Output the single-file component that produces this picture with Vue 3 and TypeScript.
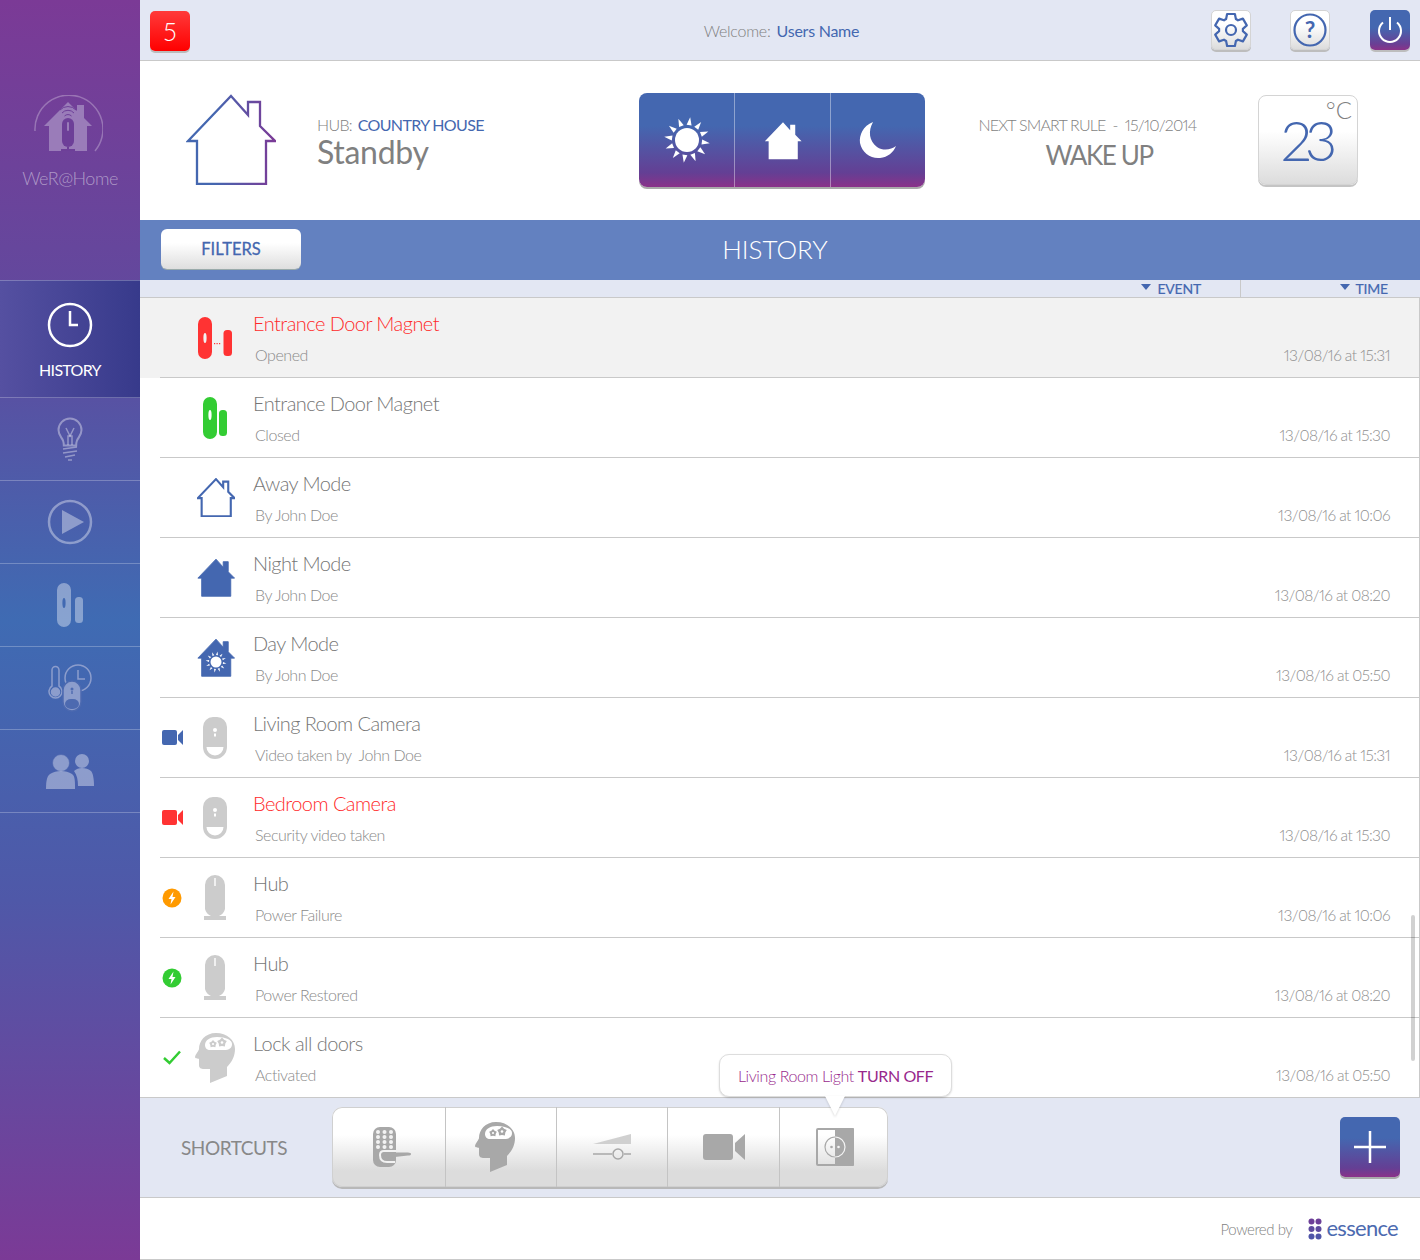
<template>
  <div class="app">
    <!-- icon sprite -->
    <svg class="sprite" width="0" height="0">
      <defs>
        <linearGradient id="house-grad" x1="0" y1="0" x2="1" y2="0">
          <stop offset="0" stop-color="#4467b0" />
          <stop offset=".3" stop-color="#4467b0" />
          <stop offset="1" stop-color="#7b3a96" />
        </linearGradient>
        <symbol id="i-house" viewBox="-1 -1 90 91">
          <path d="M44 1L61 20V7H73V31L88 46H79V89H10V46H1Z" />
        </symbol>
        <symbol id="i-magnet-open" viewBox="0 0 36 42">
          <path fill-rule="evenodd" d="M0 7a7 7 0 0 1 14 0v28a7 7 0 0 1-14 0zM7 16a1.600 5 0 0 0 0 10a1.600 5 0 0 0 0-10z" />
          <rect x="25.500" y="13" width="8.500" height="26" rx="3.500" />
          <rect x="16" y="26" width="1.200" height="1.200" />
          <rect x="18.500" y="26" width="1.200" height="1.200" />
          <rect x="21" y="26" width="1.200" height="1.200" />
        </symbol>
        <symbol id="i-magnet" viewBox="0 0 24 42">
          <path fill-rule="evenodd" d="M0 7a7 7 0 0 1 14 0v28a7 7 0 0 1-14 0zM7 13a1.600 5 0 0 0 0 10a1.600 5 0 0 0 0-10z" />
          <rect x="16" y="13" width="8" height="26" rx="3.500" />
        </symbol>
        <symbol id="i-sensor" viewBox="0 0 24 42">
          <path fill-rule="evenodd" d="M10 0h4a10 10 0 0 1 10 10v20a12 12 0 0 1-24 0v-20a10 10 0 0 1 10-10zM12 11a2 2 0 1 0 0 4a2 2 0 1 0 0-4zM11 16.500h2v3h-2zM3.500 30h17a8.500 8.500 0 0 1-17 0z" />
        </symbol>
        <symbol id="i-hub" viewBox="0 0 22 45">
          <path fill-rule="evenodd" d="M11 0a10 10 0 0 1 10 10v24a10 10 0 0 1-6 7h7v4h-22v-4h7a10 10 0 0 1-6-7v-24a10 10 0 0 1 10-10zM10.300 3v8h1.400v-8z" />
        </symbol>
        <symbol id="i-cam" viewBox="0 0 21 15">
          <rect width="15" height="15" rx="2" />
          <path d="M21 0v15l-5-5v-5z" />
        </symbol>
        <symbol id="i-head" viewBox="0 0 40 50">
          <path d="M21 0C10 0 4 8 4 16c0 1.500-4 6-4 8 0 1.500 3 1.500 4 2v6c0 3 2 4 5 4h6v14l17-7v-9c5-5 8-11 8-18C40 7 32 0 21 0z" />
          <path fill="#fff" d="M22 4c-7 0-12 3-12 8 0 3 2 5 5 5h14c5 0 8-2 8-6 0-4-6-7-15-7z" />
          <polygon :points="star(18, 11, 4)" />
          <polygon :points="star(27, 9.500, 5)" />
          <circle cx="18" cy="11" r="1.100" fill="#fff" />
          <circle cx="27" cy="9.500" r="1.300" fill="#fff" />
        </symbol>
      </defs>
    </svg>

    <aside class="sidebar">
      <div class="brand">
        <svg class="brand-logo" viewBox="0 0 70 58" width="70" height="58">
          <path d="M2 36A34 34 0 1 1 62 56" fill="none" stroke="rgba(255,255,255,.28)" stroke-width="1.500" />
          <path d="M35 7L44 16V10H51V23L59 31H54V56H16V31H11Z" fill="#9a7cb9" />
          <rect x="29" y="23" width="12" height="29" rx="6" fill="#6d3f98" />
          <rect x="34" y="27" width="2" height="9" rx="1" fill="#9a7cb9" />
          <path d="M28 55h14" stroke="#6d3f98" stroke-width="2" />
          <path d="M35 52v3" stroke="#6d3f98" stroke-width="2" />
          <path d="M27 15a11 11 0 0 1 16 0M29 18a8 8 0 0 1 12 0M31.500 21a5 5 0 0 1 7 0" fill="none" stroke="#6d3f98" stroke-width="1" />
        </svg>
        <div class="brand-name">WeR@Home</div>
      </div>
      <nav class="nav">
        <a class="nav-item active">
          <svg viewBox="0 0 46 46" width="46" height="46" fill="none" stroke="#fff" stroke-width="2.500">
            <circle cx="23" cy="23" r="21" />
            <path d="M23 9V23H31" />
          </svg>
          <span>HISTORY</span>
        </a>
        <a class="nav-item">
          <svg viewBox="0 0 26 44" width="26" height="44" fill="none" stroke="currentColor" stroke-width="2">
            <path d="M13 1.500a11.500 11.500 0 0 0-11.500 11.500c0 5 3 7 4.500 10.500.6 1.500.8 3 .8 5h12.400c0-2 .2-3.500.8-5 1.500-3.500 4.500-5.500 4.500-10.500A11.500 11.500 0 0 0 13 1.500z" />
            <path d="M9 11l4 8 4-8" stroke-width="1.500" />
            <path d="M11 28v-9h4v9" stroke-width="1.500" />
            <path d="M6 32l14-2M6 36l14-2M8 40l10-2M11 43h4" stroke-width="1.500" />
          </svg>
        </a>
        <a class="nav-item">
          <svg viewBox="0 0 46 46" width="46" height="46" fill="none" stroke="currentColor" stroke-width="2.500">
            <circle cx="23" cy="23" r="21" />
            <path d="M15 11L37 23L15 35Z" fill="currentColor" stroke="none" />
          </svg>
        </a>
        <a class="nav-item">
          <svg viewBox="0 0 26 44" width="26" height="44" fill="currentColor">
            <path fill-rule="evenodd" d="M0 7a7 7 0 0 1 14 0v30a7 7 0 0 1-14 0zM7 15a1.600 5 0 0 0 0 10a1.600 5 0 0 0 0-10z" />
            <rect x="18" y="14" width="8" height="26" rx="3.500" />
          </svg>
        </a>
        <a class="nav-item">
          <svg viewBox="0 0 44 48" width="44" height="48" fill="none" stroke="#8c9dcc" stroke-width="1.500">
            <circle cx="30" cy="14" r="13" />
            <path d="M30 6v9h7" />
            <path d="M4 22V6a3.500 3.500 0 0 1 7 0v16a6.500 6.500 0 1 1-7 0z" />
            <circle cx="7.500" cy="28" r="4" fill="#8c9dcc" />
            <rect x="15" y="17" width="18" height="30" rx="9" fill="#8c9dcc" stroke="#4d6ab0" />
            <rect x="17" y="35" width="14" height="10" rx="6" fill="#4d6ab0" stroke="none" />
            <circle cx="24" cy="25" r="1.500" fill="#4d6ab0" stroke="none" />
            <rect x="23.300" y="27" width="1.400" height="3" fill="#4d6ab0" stroke="none" />
          </svg>
        </a>
        <a class="nav-item">
          <svg viewBox="0 0 48 35" width="48" height="35" fill="currentColor">
            <circle cx="36" cy="7" r="7" />
            <path d="M28 17c2-2 5-3 8-3s7 1 9 3c2 2 3 8 3 15h-16c0-6-1-11-4-15z" />
            <circle cx="15" cy="9" r="8.500" stroke="#4a63ac" stroke-width=".6" />
            <path d="M0 35c0-8 1-13 4-15 3-2 7-3 11-3s8 1 11 3c3 2 3 7 3 15z" />
          </svg>
        </a>
      </nav>
    </aside>

    <main class="main">
      <header class="topbar">
        <div class="topbar-left"><button class="alert-badge">5</button></div>
        <div class="welcome">Welcome: <b>Users Name</b></div>
        <div class="topbar-actions">
          <button class="square-btn gear">
            <svg viewBox="0 0 36 36" width="36" height="36" fill="none" stroke="#4467b0" stroke-width="2.200" stroke-linejoin="round">
              <path :d="gearPath" />
              <circle cx="18" cy="18" r="5" />
            </svg>
          </button>
          <button class="square-btn">
            <svg viewBox="0 0 36 36" width="36" height="36" fill="none" stroke="#4467b0" stroke-width="2.200">
              <circle cx="18" cy="18" r="15.500" />
              <text x="18" y="26" class="help-mark">?</text>
            </svg>
          </button>
          <button class="square-btn dark">
            <svg viewBox="0 0 36 36" width="36" height="36" fill="none" stroke="#fff" stroke-width="2">
              <path d="M11 10.500a11 11 0 1 0 14 0" />
              <path d="M18 5V18" />
            </svg>
          </button>
        </div>
      </header>

      <section class="hero">
        <svg class="hero-house" width="90" height="91"><use href="#i-house" /></svg>
        <div class="hub">
          <div class="hub-label">HUB: <b>COUNTRY HOUSE</b></div>
          <div class="hub-state">Standby</div>
        </div>
        <div class="modes">
          <button class="mode">
            <svg viewBox="-24 -24 48 48" width="48" height="48" fill="#fff">
              <circle r="12" />
              <polygon v-for="a in sunRays" :key="a" points="-2.500,-15 2.500,-15 0,-23" :transform="`rotate(${a})`" />
            </svg>
          </button>
          <button class="mode">
            <svg width="38" height="39" class="mode-house"><use href="#i-house" /></svg>
          </button>
          <button class="mode">
            <svg viewBox="0 0 38 38" width="38" height="38" fill="#fff">
              <path d="M14 1C4 5 0 14 1 22c2 10 11 16 20 15 8-1 13-5 16-12-5 4-13 5-19 1C10 20 9 10 14 1z" />
            </svg>
          </button>
        </div>
        <div class="rule">
          <div class="rule-label">NEXT SMART RULE&nbsp; -&nbsp; 15/10/2014</div>
          <div class="rule-name">WAKE UP</div>
        </div>
        <div class="temp">
          <span class="temp-unit">°C</span>
          <span class="temp-value">23</span>
        </div>
      </section>

      <div class="titlebar">
        <button class="filters">FILTERS</button>
        <h1>HISTORY</h1>
      </div>

      <div class="columns">
        <div class="col col-event"><i class="caret"></i>EVENT</div>
        <div class="col col-time"><i class="caret"></i>TIME</div>
      </div>

      <div class="list">
        <div v-for="row in rows" :key="row.id" class="row-wrap" :class="{ selected: row.selected }">
          <div class="row">
            <div class="status">
              <svg v-if="row.status === 'cam'" width="21" height="15" :class="row.alert ? 'c-red' : 'c-blue'"><use href="#i-cam" /></svg>
              <svg v-else-if="row.status === 'fail' || row.status === 'ok'" viewBox="0 0 20 20" width="20" height="20">
                <circle cx="10" cy="10" r="9.500" :fill="row.status === 'fail' ? '#ff9a00' : '#33cc33'" />
                <path d="M11.500 3.500L6.500 11H9.500L8.500 16.500L13.500 9H10.500Z" fill="#fff" />
              </svg>
              <svg v-else-if="row.status === 'check'" class="check" viewBox="0 0 18 15" width="18" height="15" fill="none" stroke="#33cc33" stroke-width="2.500">
                <path d="M1 8L6.500 13L17 1.500" />
              </svg>
            </div>
            <div class="device">
              <svg v-if="row.icon === 'magnet-open'" width="36" height="42" class="c-red"><use href="#i-magnet-open" /></svg>
              <svg v-else-if="row.icon === 'magnet'" width="24" height="42" class="c-green"><use href="#i-magnet" /></svg>
              <svg v-else-if="row.icon === 'away'" width="38" height="39" class="h-outline"><use href="#i-house" /></svg>
              <svg v-else-if="row.icon === 'night'" width="38" height="39" class="h-solid"><use href="#i-house" /></svg>
              <span v-else-if="row.icon === 'day'" class="day-house">
                <svg width="38" height="39" class="h-solid"><use href="#i-house" /></svg>
                <svg class="day-sun" viewBox="-11 -11 22 22" width="22" height="22" fill="#fff">
                  <circle r="5.500" />
                  <polygon v-for="a in sunRays" :key="a" points="-1,-7 1,-7 0,-10.500" :transform="`rotate(${a})`" />
                </svg>
              </span>
              <svg v-else-if="row.icon === 'sensor'" width="24" height="42" class="c-grey"><use href="#i-sensor" /></svg>
              <svg v-else-if="row.icon === 'hub'" width="22" height="45" class="c-grey"><use href="#i-hub" /></svg>
              <svg v-else-if="row.icon === 'head'" width="40" height="50" class="c-grey"><use href="#i-head" /></svg>
            </div>
            <div class="texts">
              <div class="title" :class="{ alert: row.alert }">{{ row.title }}</div>
              <div class="sub">{{ row.sub }}</div>
            </div>
            <div class="time">{{ row.time }}</div>
          </div>
        </div>
        <div class="scroll-thumb"></div>
      </div>

      <section class="shortcuts">
        <div class="shortcuts-label">SHORTCUTS</div>
        <div class="shortcut-group">
          <button class="shortcut s-lock">
            <svg viewBox="0 0 38 40" width="38" height="40" fill="#a8a8a8">
              <rect width="23" height="40" rx="7" />
              <circle v-for="d in keypadDots" :key="d.id" :cx="d.x" :cy="d.y" r="2" fill="#f2f2f2" />
              <path d="M23 24H11Q7 24 7 28Q7 35 14 35H22" fill="none" stroke="#f2f2f2" stroke-width="2" />
              <path d="M10 25.500H35Q38 25.500 38 27Q38 28.500 35 28.500L13 31Q10 31 10 28Z" />
            </svg>
          </button>
          <button class="shortcut s-head">
            <svg width="40" height="50" class="c-short"><use href="#i-head" /></svg>
          </button>
          <button class="shortcut">
            <svg viewBox="0 0 38 26" width="38" height="26" fill="none">
              <path d="M0 10L38 0V10Z" fill="#d0d0d0" />
              <path d="M0 20H19M31 20H38" stroke="#a8a8a8" stroke-width="1.500" />
              <circle cx="25" cy="20" r="5" stroke="#a8a8a8" stroke-width="1.500" />
            </svg>
          </button>
          <button class="shortcut s-cam">
            <svg viewBox="0 0 42 26" width="42" height="26" fill="#a8a8a8">
              <rect width="30" height="26" rx="3" />
              <path d="M42 0V26L32 17V9Z" />
            </svg>
          </button>
          <button class="shortcut s-socket">
            <svg viewBox="0 0 38 38" width="38" height="38" fill="none">
              <rect x="1" y="1" width="36" height="36" rx="1" stroke="#a8a8a8" stroke-width="2" />
              <rect x="19" y="0" width="19" height="38" rx="1" fill="#a8a8a8" />
              <circle cx="19" cy="19" r="10" stroke="#f4f4f4" stroke-width="1.200" />
              <circle cx="19" cy="19" r="10" stroke="#a8a8a8" stroke-width="1.200" stroke-dasharray="31.400 31.400" stroke-dashoffset="-15.700" />
              <circle cx="15.500" cy="19" r="1.300" fill="#a8a8a8" />
              <circle cx="22.500" cy="19" r="1.300" fill="#f4f4f4" />
            </svg>
          </button>
        </div>
        <button class="add-btn">
          <svg viewBox="0 0 32 32" width="32" height="32" stroke="#fff" stroke-width="2.500"><path d="M16 0V32M0 16H32" /></svg>
        </button>
        <div class="tooltip">Living Room Light <b>TURN OFF</b></div>
      </section>

      <footer class="footer">
        <span class="powered">Powered by</span>
        <svg viewBox="0 0 14 22" width="14" height="22">
          <circle cx="3.500" cy="3.500" r="3" fill="#6d3f98" />
          <circle cx="10.500" cy="3.500" r="3" fill="#6d3f98" />
          <circle cx="3.500" cy="11" r="3" fill="#5e4a9e" />
          <circle cx="10.500" cy="11" r="3" fill="#5e4a9e" />
          <circle cx="3.500" cy="18.500" r="3" fill="#4f55a8" />
          <circle cx="10.500" cy="18.500" r="3" fill="#4f55a8" />
        </svg>
        <span class="essence">essence</span>
      </footer>
    </main>
  </div>
</template>

<script setup lang="ts">
interface HistoryRow {
  id: number;
  title: string;
  sub: string;
  time: string;
  icon: string;
  status?: string;
  alert?: boolean;
  selected?: boolean;
}

const rows: HistoryRow[] = [
  { id: 1, title: 'Entrance Door Magnet', sub: 'Opened', time: '13/08/16 at 15:31', icon: 'magnet-open', alert: true, selected: true },
  { id: 2, title: 'Entrance Door Magnet', sub: 'Closed', time: '13/08/16 at 15:30', icon: 'magnet' },
  { id: 3, title: 'Away Mode', sub: 'By John Doe', time: '13/08/16 at 10:06', icon: 'away' },
  { id: 4, title: 'Night Mode', sub: 'By John Doe', time: '13/08/16 at 08:20', icon: 'night' },
  { id: 5, title: 'Day Mode', sub: 'By John Doe', time: '13/08/16 at 05:50', icon: 'day' },
  { id: 6, title: 'Living Room Camera', sub: 'Video taken by  John Doe', time: '13/08/16 at 15:31', icon: 'sensor', status: 'cam' },
  { id: 7, title: 'Bedroom Camera', sub: 'Security video taken', time: '13/08/16 at 15:30', icon: 'sensor', status: 'cam', alert: true },
  { id: 8, title: 'Hub', sub: 'Power Failure', time: '13/08/16 at 10:06', icon: 'hub', status: 'fail' },
  { id: 9, title: 'Hub', sub: 'Power Restored', time: '13/08/16 at 08:20', icon: 'hub', status: 'ok' },
  { id: 10, title: 'Lock all doors', sub: 'Activated', time: '13/08/16 at 05:50', icon: 'head', status: 'check' },
];

const sunRays = Array.from({ length: 12 }, (_, i) => i * 30 + 8);

const keypadDots = Array.from({ length: 12 }, (_, i) => ({
  id: i,
  x: 5 + (i % 3) * 6.5,
  y: 5 + Math.floor(i / 3) * 5,
}));

// five point flower used inside the head icon
const star = (cx: number, cy: number, r: number) =>
  Array.from({ length: 10 }, (_, i) => {
    const rad = i % 2 ? r * 0.7 : r;
    const a = (i * Math.PI) / 5 - Math.PI / 2;
    return `${(cx + rad * Math.cos(a)).toFixed(1)},${(cy + rad * Math.sin(a)).toFixed(1)}`;
  }).join(' ');

// six tooth cog outline
const gearPath = (() => {
  const pts: string[] = [];
  for (let i = 0; i < 6; i++) {
    const c = (i * Math.PI) / 3 - Math.PI / 2;
    const at = (r: number, a: number) => `${(18 + r * Math.cos(a)).toFixed(1)} ${(18 + r * Math.sin(a)).toFixed(1)}`;
    pts.push(at(12, c - 0.42), at(16.5, c - 0.24), at(16.5, c + 0.24), at(12, c + 0.42));
  }
  return `M${pts.join('L')}Z`;
})();
</script>

<style>
html,
body {
  margin: 0;
  background: #fff;
}
</style>

<style scoped>
.app {
  display: flex;
  width: 1420px;
  height: 1260px;
  overflow: hidden;
  font-family: Lato, "Liberation Sans", sans-serif;
  font-weight: 300;
  font-variant-numeric: proportional-nums;
  color: #808080;
}

.sprite {
  position: absolute;
}

button {
  font-family: inherit;
  padding: 0;
  cursor: pointer;
}

b {
  font-weight: 400;
}

/* sidebar */
.sidebar {
  flex: 0 0 140px;
  display: flex;
  flex-direction: column;
  background: linear-gradient(#7b3a96 0, #5f4a9e 330px, #3f6bb3 620px, #4f58a8 900px, #7b3a96 1260px);
}

.brand {
  height: 280px;
  padding-top: 95px;
  box-sizing: border-box;
  display: flex;
  flex-direction: column;
  align-items: center;
}

.brand-logo {
  margin-left: -4px;
}

.brand-name {
  margin-top: 14px;
  font-size: 18px;
  letter-spacing: -0.5px;
  color: rgba(255, 255, 255, 0.46);
}

.nav-item {
  height: 83px;
  box-sizing: border-box;
  border-bottom: 1px solid rgba(255, 255, 255, 0.25);
  display: flex;
  flex-direction: column;
  align-items: center;
  justify-content: center;
  color: rgba(255, 255, 255, 0.38);
}

.nav-item.active {
  height: 118px;
  border-top: 1px solid rgba(255, 255, 255, 0.25);
  gap: 12px;
  padding-top: 2px;
  background: linear-gradient(90deg, #5550a1, #373a8b);
  color: #fff;
  font-size: 16px;
  font-weight: 400;
  letter-spacing: -0.7px;
}

/* top bar */
.main {
  flex: 1;
  display: flex;
  flex-direction: column;
  min-width: 0;
}

.topbar {
  height: 61px;
  flex: none;
  box-sizing: border-box;
  display: grid;
  grid-template-columns: 1fr auto 1fr;
  align-items: center;
  padding: 0 10px;
  background: #e3e7f3;
  border-bottom: 1px solid #c9c9c9;
}

.alert-badge {
  width: 40px;
  height: 40px;
  margin-top: 1px;
  border: 0;
  border-radius: 5px;
  background: linear-gradient(#ff3a3a, #ff0000);
  box-shadow: 0 2px 0 #bbb;
  color: #fff;
  font-size: 25px;
  font-weight: 300;
}

.welcome {
  padding-left: 3px;
  font-size: 16px;
  letter-spacing: -0.25px;
  color: #7f7f7f;
}

.welcome b {
  margin-left: 2px;
  color: #4467b0;
}

.topbar-actions {
  display: flex;
  justify-content: flex-end;
  gap: 40px;
}

.square-btn {
  width: 40px;
  height: 40px;
  box-sizing: border-box;
  border: 1px solid #d4d4d4;
  border-radius: 5px;
  background: linear-gradient(#fff 35%, #dcdcdc);
  box-shadow: 0 2px 0 #bdbdbd;
  display: flex;
  align-items: center;
  justify-content: center;
}

.square-btn.gear {
  margin-right: -1px;
}

.square-btn.dark {
  border: 0;
  background: linear-gradient(#4467b0 45%, #6a3f94 85%, #8a3289);
}

.help-mark {
  font-family: Lato, sans-serif;
  font-size: 23px;
  font-weight: 700;
  text-anchor: middle;
  fill: #4467b0;
  stroke: none;
}

/* hero */
.hero {
  height: 159px;
  flex: none;
  display: flex;
  align-items: center;
  padding-left: 46px;
  box-sizing: border-box;
}

.hero-house {
  flex: none;
  margin-top: -2px;
  fill: none;
  stroke: url(#house-grad);
  stroke-width: 2.300;
}

.hub {
  width: 322px;
  margin-left: 41px;
  padding-top: 5px;
  flex: none;
}

.hub-label {
  font-size: 16px;
  letter-spacing: -0.65px;
  color: #7f7f7f;
}

.hub-label b {
  margin-left: 2px;
  color: #4467b0;
}

.hub-state {
  margin-top: -2px;
  font-size: 32px;
  letter-spacing: -0.3px;
  line-height: 40px;
  font-weight: 400;
  color: #808080;
}

.modes {
  flex: none;
  width: 286px;
  height: 94px;
  margin-top: -1px;
  display: grid;
  grid-template-columns: 95px 96px 95px;
  border-radius: 8px;
  overflow: hidden;
  box-shadow: 0 2px 0 #aaa;
  background: linear-gradient(#4467b0 35%, #643f94 85%, #8a3289);
}

.mode {
  border: 0;
  background: none;
  display: flex;
  align-items: center;
  justify-content: center;
}

.mode + .mode {
  border-left: 1px solid rgba(255, 255, 255, 0.4);
}

.mode-house {
  fill: #fff;
}

.rule {
  width: 326px;
  flex: none;
  text-align: center;
  padding: 6px 1px 0 0;
  box-sizing: border-box;
  margin-right: 7px;
}

.rule-label {
  font-size: 16px;
  letter-spacing: -0.8px;
  color: #7f7f7f;
}

.rule-name {
  margin-top: 4px;
  padding-left: 23px;
  font-size: 26px;
  letter-spacing: -1.400px;
  line-height: 34px;
  font-weight: 400;
  color: #808080;
}

.temp {
  position: relative;
  flex: none;
  width: 100px;
  height: 90px;
  margin-top: -1px;
  box-sizing: border-box;
  border: 1px solid #d4d4d4;
  border-radius: 8px;
  background: linear-gradient(#fff 40%, #dcdcdc);
  box-shadow: 0 2px 0 #c4c4c4;
  display: flex;
  align-items: center;
  justify-content: center;
}

.temp-value {
  margin: 0 5px 0 0;
  font-size: 56px;
  line-height: 40px;
  letter-spacing: -7px;
  color: #4467b0;
}

.temp-unit {
  position: absolute;
  top: 4px;
  right: 5px;
  font-size: 24px;
  line-height: 20px;
  color: #808080;
}

/* title bar */
.titlebar {
  height: 60px;
  flex: none;
  box-sizing: border-box;
  display: grid;
  grid-template-columns: 1fr auto 1fr;
  align-items: center;
  padding: 0 31px 0 21px;
  background: #6381c0;
}

.titlebar h1 {
  margin: -2px 0 0;
  font-size: 26px;
  font-weight: 300;
  color: #fff;
}

.filters {
  width: 140px;
  height: 40px;
  margin-top: -2px;
  border: 0;
  border-radius: 6px;
  background: linear-gradient(#fff 35%, #dedede);
  box-shadow: 0 1px 0 #9aa;
  color: #4467b0;
  font-size: 16.500px;
  font-weight: 400;
  -webkit-text-stroke: 0.3px #4467b0;
}

/* column headers */
.columns {
  height: 18px;
  flex: none;
  box-sizing: border-box;
  display: flex;
  justify-content: flex-end;
  background: #e3e7f3;
  border-bottom: 1px solid #c9c9c9;
  font-size: 14px;
  font-weight: 400;
  letter-spacing: -0.2px;
  -webkit-text-stroke: 0.2px #4467b0;
  color: #4467b0;
  line-height: 18px;
}

.col {
  display: flex;
  align-items: center;
  justify-content: flex-end;
  box-sizing: border-box;
  gap: 6px;
}

.col-event {
  padding-right: 39px;
  border-right: 1px solid #c9c9c9;
}

.col-time {
  width: 179px;
  padding-right: 32px;
}

.caret {
  width: 0;
  height: 0;
  margin-top: -3px;
  border-left: 5px solid transparent;
  border-right: 5px solid transparent;
  border-top: 6px solid #4467b0;
}

/* list */
.list {
  position: relative;
  flex: none;
  height: 799px;
  overflow: hidden;
  border-right: 1px solid #c9c9c9;
}

.row-wrap {
  padding-left: 20px;
  height: 80px;
}

.row-wrap.selected {
  background: #f2f2f2;
}

.row {
  height: 80px;
  box-sizing: border-box;
  border-bottom: 1px solid #c9c9c9;
  display: grid;
  grid-template-columns: 25px 61px 1fr auto;
  column-gap: 0;
  align-items: center;
}

.row-wrap:last-of-type .row {
  border-bottom: 0;
}

.status,
.device {
  display: flex;
  align-items: center;
  justify-content: center;
}

.status {
  justify-content: flex-start;
  padding-left: 2px;
}

.status .check {
  margin-left: 1px;
}

.device svg {
  display: block;
}

.device .c-grey,
.device .c-green {
  margin-right: 1px;
}

.texts {
  padding-left: 7px;
}

.title {
  font-size: 20px;
  letter-spacing: -0.55px;
  line-height: 26px;
  color: #767676;
}

.title.alert {
  color: #ff2a2a;
}

.sub {
  margin: 9px 0 0 2px;
  font-size: 16px;
  letter-spacing: -0.45px;
  line-height: 20px;
  color: #8a8a8a;
  white-space: pre;
}

.time {
  align-self: end;
  padding: 0 29px 12px 0;
  font-size: 15.500px;
  letter-spacing: -0.55px;
  line-height: 20px;
  color: #8f8f8f;
}

.c-red {
  fill: #ff3333;
}

.c-green {
  fill: #33cc33;
}

.c-blue {
  fill: #4467b0;
}

.c-grey {
  fill: #cccccc;
}

.c-short {
  fill: #a8a8a8;
}

.h-outline {
  fill: none;
  stroke: #4467b0;
  stroke-width: 5;
}

.h-solid {
  fill: #4467b0;
  stroke: #4467b0;
  stroke-width: 2;
}

.day-house {
  position: relative;
  display: block;
  width: 38px;
  height: 39px;
}

.day-sun {
  position: absolute;
  left: 8px;
  top: 13px;
}

.scroll-thumb {
  position: absolute;
  top: 617px;
  right: 4px;
  width: 4px;
  height: 146px;
  border-radius: 2px;
  background: rgba(0, 0, 0, 0.18);
}

/* shortcuts */
.shortcuts {
  position: relative;
  flex: none;
  height: 101px;
  box-sizing: border-box;
  display: flex;
  align-items: center;
  padding: 0 20px 0 41px;
  background: #e3e7f3;
  border-top: 1px solid #c9c9c9;
  border-bottom: 1px solid #c9c9c9;
}

.shortcuts-label {
  width: 151px;
  font-size: 19px;
  font-weight: 400;
  letter-spacing: -0.45px;
  color: #888;
}

.shortcut-group {
  display: grid;
  grid-template-columns: 113px 111px 111px 112px 109px;
  width: 556px;
  height: 80px;
  margin-top: -2px;
  border-radius: 10px;
  overflow: hidden;
  box-shadow: inset 0 0 0 1px #d0d0d0, 0 2px 0 #b8b8b8;
  background: linear-gradient(#fff 35%, #dcdcdc 80%);
}

.shortcut {
  border: 0;
  background: none;
  display: flex;
  align-items: center;
  justify-content: center;
}

.shortcut + .shortcut {
  border-left: 1px solid #c4c4c4;
}

.s-lock svg {
  margin-left: 6px;
}

.s-head svg {
  margin-right: 12px;
}

.s-cam svg {
  margin-left: 1px;
}

.s-socket svg {
  margin-left: 2px;
}

.add-btn {
  margin-left: auto;
  margin-top: -2px;
  width: 60px;
  height: 60px;
  border: 0;
  border-radius: 5px;
  background: linear-gradient(#4467b0 35%, #643f94 85%, #8a3289);
  box-shadow: 0 2px 0 #aaa;
  display: flex;
  align-items: center;
  justify-content: center;
}

.tooltip {
  position: absolute;
  left: 579px;
  top: -44px;
  width: 233px;
  height: 43px;
  box-sizing: border-box;
  border: 1px solid #ddd;
  border-radius: 10px;
  background: #fff;
  box-shadow: 0 1px 2px rgba(0, 0, 0, 0.15);
  color: #98288c;
  font-size: 16px;
  letter-spacing: -0.4px;
  line-height: 41px;
  text-align: center;
}

.tooltip::after {
  content: "";
  position: absolute;
  left: 105px;
  top: 41px;
  border-left: 10px solid transparent;
  border-right: 10px solid transparent;
  border-top: 20px solid #fff;
  filter: drop-shadow(0 1px 1px rgba(0, 0, 0, 0.15));
}

/* footer */
.footer {
  flex: 1;
  display: flex;
  align-items: center;
  justify-content: flex-end;
  padding-right: 22px;
  box-sizing: border-box;
  border-bottom: 1px solid #c9c9c9;
}

.powered {
  margin-right: 16px;
  font-size: 15px;
  letter-spacing: -0.45px;
  color: #7f7f7f;
}

.essence {
  margin: -3px 0 0 4px;
  font-size: 22px;
  font-weight: 400;
  letter-spacing: -0.7px;
  color: #4c6ab0;
}
</style>
